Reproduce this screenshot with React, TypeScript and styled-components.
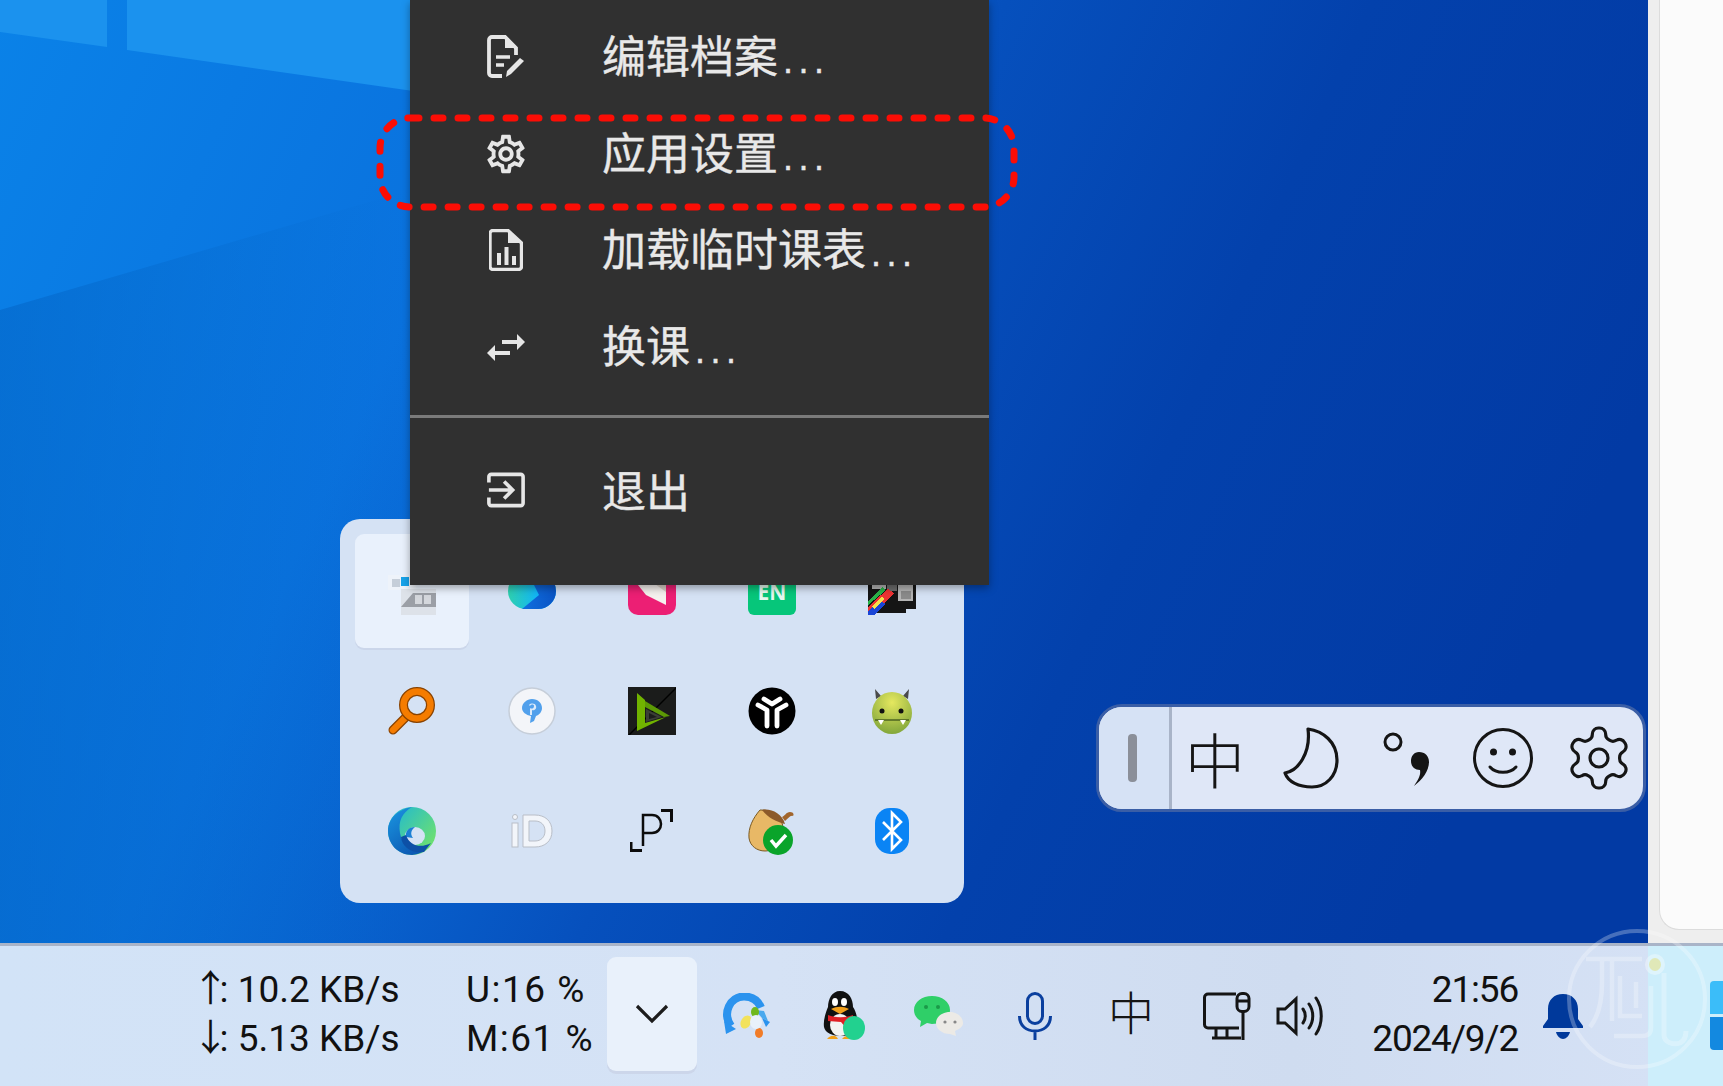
import React from 'react';
import styled, { createGlobalStyle } from 'styled-components';
import { MdOutlineSettings } from 'react-icons/md';

const GlobalStyle = createGlobalStyle`
  html, body { margin: 0; padding: 0; width: 1723px; height: 1086px; overflow: hidden; }
  #root { width: 100%; height: 100%; }
`;

const Screen = styled.div`
  display: flex;
  flex-direction: column;
  width: 1723px;
  height: 1086px;
  overflow: hidden;
  position: relative;
  font-family: Roboto, "Noto Sans CJK SC", sans-serif;
`;

const Desktop = styled.div`
  flex: 1;
  position: relative;
`;

const Wallpaper = styled.svg`
  position: absolute;
  left: 0;
  top: 0;
`;

// ---------- context menu ----------
const Menu = styled.div`
  position: absolute;
  left: 410px;
  top: 0;
  width: 579px;
  height: 585px;
  padding-top: 9px;
  box-sizing: border-box;
  background: #303030;
  box-shadow: 0 3px 8px rgba(0, 0, 0, 0.35);
  z-index: 3;
`;

const MenuRow = styled.div`
  display: flex;
  align-items: center;
  height: 96.5px;
  padding-left: 70px;
  color: #e8e8e8;
  font-family: "Noto Sans CJK SC", sans-serif;
  font-size: 44px;
  line-height: 1;
`;

const MenuIcon = styled.span`
  display: flex;
  align-items: center;
  justify-content: center;
  width: 52px;
  height: 52px;
  margin-right: 70px;
`;

const MenuLabel = styled.span`
  display: flex;
  align-items: baseline;
  margin-top: -3px;
  -webkit-text-stroke: 0.35px #e8e8e8;
`;

const Dots = styled.span`
  font-family: "Liberation Sans", sans-serif;
  letter-spacing: 5.500px;
  font-size: 36px;
  margin-left: 5px;
`;

const MenuDivider = styled.div`
  height: 3px;
  background: #7a7a7a;
  margin: 20px 0 24px;
`;

const Highlight = styled.svg`
  position: absolute;
  left: 370px;
  top: 108px;
  z-index: 4;
`;

// ---------- tray popup ----------
const TrayPopup = styled.div`
  position: absolute;
  left: 340px;
  top: 519px;
  width: 624px;
  height: 384px;
  box-sizing: border-box;
  padding: 15px;
  border-radius: 20px;
  background: #d5e2f4;
  display: grid;
  grid-template-columns: repeat(5, 114px);
  grid-auto-rows: 114px;
  gap: 6px;
  z-index: 2;
`;

const TrayCell = styled.div<{ $active?: boolean }>`
  display: flex;
  align-items: center;
  justify-content: center;
  border-radius: 9px;
  background: ${p => (p.$active ? '#e9f1fc' : 'transparent')};
  box-shadow: ${p => (p.$active ? '0 2px 0 #cbd6ea' : 'none')};
`;

// ---------- input method bar ----------
const ImeBar = styled.div`
  position: absolute;
  left: 1096px;
  top: 704px;
  width: 550px;
  height: 108px;
  box-sizing: border-box;
  display: flex;
  border: 3px solid #3a5ea6;
  border-radius: 26px;
  background: #dfe7f7;
  overflow: hidden;
  z-index: 2;
`;

const ImeHandle = styled.div`
  width: 70px;
  flex: none;
  background: #d6e2f5;
  border-right: 3px solid #a9b4c8;
  display: flex;
  align-items: center;
  justify-content: center;
`;

const ImeGrip = styled.div`
  width: 9px;
  height: 48px;
  border-radius: 4px;
  background: #8b8f99;
  margin-right: 4px;
`;

const ImeButtons = styled.div`
  display: flex;
  margin-left: -5px;
`;

const ImeButton = styled.div`
  width: 96px;
  flex: none;
  display: flex;
  align-items: center;
  justify-content: center;
  color: #151515;
  font-family: "Noto Sans CJK SC", sans-serif;
  font-size: 60px;
  font-weight: 300;
  line-height: 1;
`;

// ---------- side window ----------
const SideWindow = styled.div`
  position: absolute;
  left: 1648px;
  top: 0;
  right: 0;
  bottom: 0;
  background: #eeeeee;
  padding: 0 0 13px 11px;
  box-sizing: border-box;
  display: flex;
`;

const SideCard = styled.div`
  flex: 1;
  background: #fbfbfb;
  border: 1px solid #dcdcdc;
  border-right: 0;
  border-top: 0;
  border-bottom-left-radius: 20px;
`;

// ---------- taskbar ----------
const Taskbar = styled.div`
  height: 143px;
  flex: none;
  box-sizing: border-box;
  border-top: 3px solid #a9b4c8;
  background: linear-gradient(90deg, #d2e3f7 0%, #d5e2f5 45%, #cfdcf0 75%, #d6e2f6 100%);
  display: flex;
  align-items: center;
  padding-left: 192px;
  position: relative;
`;

const TaskbarTint = styled.div`
  position: absolute;
  left: 1648px;
  top: -3px;
  right: 0;
  bottom: 0;
  background: #cdeefb;
  border-top: 3px solid #a9b4c8;
`;

const StatColumn = styled.div<{ $width: number; $spacing?: number }>`
  width: ${p => p.$width}px;
  flex: none;
  display: flex;
  flex-direction: column;
  gap: 9px;
  margin-top: -4px;
  color: #111;
  font-size: 37px;
  line-height: 40px;
  letter-spacing: ${p => p.$spacing ?? 0}px;
  white-space: nowrap;
`;

const Arrow = styled.span`
  letter-spacing: -9.500px;
`;

const ChevronButton = styled.div`
  width: 90px;
  height: 114px;
  flex: none;
  margin: -4px 2px 0 0;
  border-radius: 9px;
  background: #e9f1fb;
  box-shadow: 0 3px 0 #ccd6ea;
  display: flex;
  align-items: center;
  justify-content: center;
`;

const TraySlot = styled.div<{ $width?: number }>`
  width: ${p => p.$width ?? 96}px;
  flex: none;
  display: flex;
  align-items: center;
  justify-content: center;
`;

const TrayGlyph = styled.span`
  color: #151515;
  font-family: "Noto Sans CJK SC", sans-serif;
  font-size: 46px;
  font-weight: 300;
  line-height: 1;
  margin-top: -12px;
`;

const Clock = styled.div`
  width: 191px;
  flex: none;
  text-align: right;
  display: flex;
  flex-direction: column;
  gap: 9px;
  margin-top: -4px;
  color: #111;
  font-size: 37px;
  line-height: 40px;
  letter-spacing: -1.200px;
`;

const BellSlot = styled.div`
  margin-left: 25px;
  display: flex;
  z-index: 1;
`;

const WinLogo = styled.div`
  position: absolute;
  right: 0;
  top: 35px;
  width: 13px;
  height: 69px;
  display: flex;
  flex-direction: column;
  gap: 3px;
  z-index: 1;
`;

const WinPane = styled.div<{ $bottom?: boolean }>`
  flex: 1;
  background: ${p => (p.$bottom ? '#1389e0' : '#3bbdf9')};
  border-radius: ${p => (p.$bottom ? '0 0 0 4px' : '4px 0 0 0')};
`;

const Watermark = styled.svg`
  position: absolute;
  left: 1564px;
  top: 926px;
  z-index: 5;
  pointer-events: none;
`;

const WatermarkDot = styled.div`
  position: absolute;
  left: 1649px;
  top: 958px;
  width: 12px;
  height: 13px;
  border-radius: 50%;
  background: #e0e8b8;
  box-shadow: 0 0 0 4px rgba(255, 255, 255, 0.35);
  z-index: 6;
`;

// ---------- menu icons ----------
const menuStroke = '#e6e6e6';

const EditDocIcon = () => (
  <svg width="40" height="44" viewBox="0 0 40 44" fill="none">
    <path d="M16 41H6a3 3 0 0 1-3-3V5a3 3 0 0 1 3-3h13l11 11v7" stroke={menuStroke} strokeWidth="3.800" />
    <path d="M19 2v11h11z" fill={menuStroke} />
    <path d="M10 22h14M10 30h8" stroke={menuStroke} strokeWidth="3.400" />
    <path d="M20 42l1-6 13-13 4 3-13 13z" fill={menuStroke} />
  </svg>
);

const ChartDocIcon = () => (
  <svg width="34" height="42" viewBox="0 0 34 42" fill="none">
    <path d="M4 1.500h15L32.500 14v23.500a3 3 0 0 1-3 3H4a3 3 0 0 1-3-3v-33a3 3 0 0 1 3-3z" stroke={menuStroke} strokeWidth="3.400" />
    <path d="M19 1.500V14h13.500z" fill={menuStroke} />
    <path d="M8 24h4v12H8zM15.500 18h4v18h-4zM23 27h4v9h-4z" fill={menuStroke} />
  </svg>
);

const SwapIcon = () => (
  <svg width="40" height="30" viewBox="0 0 40 30" fill="none">
    <path d="M16 10h16" stroke={menuStroke} strokeWidth="4" />
    <path d="M31 2l8 8-8 8z" fill={menuStroke} />
    <path d="M8 21h16" stroke={menuStroke} strokeWidth="4" />
    <path d="M9 13l-8 8 8 8z" fill={menuStroke} />
  </svg>
);

const ExitIcon = () => (
  <svg width="38" height="36" viewBox="0 0 40 36" fill="none">
    <path d="M2 10V4a2.500 2.500 0 0 1 2.500-2.500h31A2.500 2.500 0 0 1 38 4v28a2.500 2.500 0 0 1-2.500 2.500h-31A2.500 2.500 0 0 1 2 32v-6" stroke={menuStroke} strokeWidth="3.800" />
    <path d="M2 18h24M18 9l9 9-9 9" stroke={menuStroke} strokeWidth="3.800" />
  </svg>
);

// ---------- tray popup icons ----------
const ClusterIcon = () => (
  <svg width="48" height="48" viewBox="0 0 48 48">
    <rect x="0" y="8" width="28" height="15" fill="#eef3fa" />
    <rect x="4" y="12" width="8" height="8" fill="#c5ced9" />
    <rect x="13" y="10" width="8" height="9" fill="#17a3ea" />
    <rect x="13" y="22" width="35" height="26" fill="#dde2e9" />
    <path d="M13 40l12-14h23v14z" fill="#9b9fa6" />
    <rect x="27" y="28" width="7" height="9" fill="#d4d7dc" />
    <rect x="36" y="28" width="7" height="9" fill="#d4d7dc" />
  </svg>
);

const CapsuleIcon = () => (
  <svg width="48" height="48" viewBox="0 0 48 48">
    <defs>
      <linearGradient id="cap" x1="0" x2="1">
        <stop offset="0" stopColor="#2fd0ae" />
        <stop offset="0.6" stopColor="#12b6f5" />
      </linearGradient>
      <linearGradient id="capDark" x1="0" x2="1">
        <stop offset="0" stopColor="#0f6fe0" />
        <stop offset="1" stopColor="#0a54c4" />
      </linearGradient>
    </defs>
    <rect y="6" width="48" height="36" rx="18" fill="url(#cap)" />
    <path d="M20 6h10a18 18 0 0 1 0 36H14l17-14z" fill="url(#capDark)" />
  </svg>
);

const MailIcon = () => (
  <svg width="48" height="48" viewBox="0 0 48 48">
    <rect width="48" height="48" rx="10" fill="#ec1f74" />
    <path d="M10 8h28v30L18 28l-8-10z" fill="#f5f1ee" />
    <path d="M27 17l11 0v8z" fill="#d9cfc6" />
  </svg>
);

const EnIcon = () => (
  <svg width="48" height="48" viewBox="0 0 48 48">
    <rect width="48" height="48" rx="6" fill="#06c67a" />
    <text x="24" y="33" textAnchor="middle" fontFamily="'Noto Sans'" fontWeight="700" fontSize="21" fill="#e4f8ef">EN</text>
  </svg>
);

const PixelBoxIcon = () => (
  <svg width="48" height="48" viewBox="0 0 48 48" shapeRendering="crispEdges">
    <path d="M0 2h48v40h-10v4H0z" fill="#151515" />
    <path d="M4 6h14v16H4zM30 6h15v28H30z" fill="#b4b4b4" />
    <path d="M19 12h10v12H19z" fill="#6d6d6d" />
    <path d="M33 24h10v8H33z" fill="#8a8a8a" />
    <path d="M0 40l6-6 14-12 6 4-14 14-6 8H0z" fill="#e33" />
    <path d="M0 34l14-14 4 3-18 15z" fill="#2bb34a" />
    <path d="M0 44l12-10 6 3-12 11H0z" fill="#1a45d6" />
    <path d="M4 39l10-9 3 2-11 10z" fill="#f5e14a" />
  </svg>
);

const SearchIcon = () => (
  <svg width="48" height="48" viewBox="0 0 48 48" fill="none">
    <path d="M5 43l13-13" stroke="#8a4300" strokeWidth="9" strokeLinecap="round" />
    <path d="M5 43l13-13" stroke="#f57c00" strokeWidth="6.500" strokeLinecap="round" />
    <circle cx="29" cy="18" r="13.500" stroke="#8a4300" strokeWidth="9" />
    <circle cx="29" cy="18" r="13.500" stroke="#f57c00" strokeWidth="6.500" />
  </svg>
);

const PinIcon = () => (
  <svg width="48" height="48" viewBox="0 0 48 48">
    <circle cx="24" cy="24" r="23" fill="#f3f5f9" stroke="#c6ced9" strokeWidth="1.500" />
    <path d="M24 12c6 0 10 4 10 9 0 4-3 7-6 8l-2 5-4 2 1-7c-5-1-9-4-9-8 0-5 5-9 10-9z" fill="#3f97ea" opacity="0.9" />
    <path d="M21 18c2-2 6-2 7 1 1 3-2 5-4 4v5h-2v-7c1 1 4 1 4-2 0-2-3-2-4 0z" fill="#dbeafa" />
  </svg>
);

const GreenPlayIcon = () => (
  <svg width="48" height="48" viewBox="0 0 48 48">
    <rect width="48" height="48" fill="#1b1c1b" />
    <path d="M48 0L0 48h2L48 2z" fill="#000" />
    <path d="M9 6l8 7v23l21-6L9 44z" fill="#71b300" />
    <path d="M17 14l25 15-6 1-19-10z" fill="#5c9a05" />
    <path d="M18 22l16 8-16 5z" fill="#3b3f36" />
    <path d="M21 26l8 4-8 2z" fill="#1b1c1b" />
  </svg>
);

const BlackCircleIcon = () => (
  <svg width="48" height="48" viewBox="0 0 48 48" fill="none">
    <circle cx="24" cy="24" r="23.500" fill="#000" />
    <path d="M10 18l9 5v16M38 18l-9 5v16M16 12l8 5 8-5" stroke="#fff" strokeWidth="4.800" strokeLinecap="round" strokeLinejoin="round" />
  </svg>
);

const MonsterIcon = () => (
  <svg width="48" height="48" viewBox="0 0 48 48">
    <defs>
      <radialGradient id="mon" cx="0.5" cy="0.25" r="0.75">
        <stop offset="0" stopColor="#e5e85f" />
        <stop offset="1" stopColor="#83a73b" />
      </radialGradient>
    </defs>
    <path d="M8 12l-1-10 6 7zM40 12l1-10-6 7z" fill="#4a4a4a" />
    <ellipse cx="24" cy="26" rx="20" ry="21" fill="url(#mon)" />
    <circle cx="14" cy="24" r="2.500" fill="#111" />
    <circle cx="33" cy="24" r="2.500" fill="#111" />
    <path d="M7 33h34" stroke="#4c6320" strokeWidth="1.500" />
    <path d="M10 33l3 5 3-5zM32 33l3 5 3-5z" fill="#fff" />
  </svg>
);

const EdgeIcon = () => (
  <svg width="48" height="48" viewBox="0 0 48 48">
    <defs>
      <linearGradient id="edgeA" x1="0" y1="0" x2="1" y2="0.8">
        <stop offset="0" stopColor="#18b4dc" />
        <stop offset="1" stopColor="#72e36a" />
      </linearGradient>
      <linearGradient id="edgeB" x1="0" y1="0" x2="0.6" y2="1">
        <stop offset="0" stopColor="#1b98e2" />
        <stop offset="1" stopColor="#0c5ab4" />
      </linearGradient>
    </defs>
    <circle cx="24" cy="24" r="24" fill="url(#edgeA)" />
    <path d="M0 24C0 10 12 2 24 0 14 6 10 14 12 26c2 12 12 20 24 18a24 24 0 0 1-12 4C10 48 0 37 0 24z" fill="url(#edgeB)" />
    <ellipse cx="27" cy="29" rx="10" ry="9" fill="#d5e2f4" />
    <path d="M18 30c-1-6 3-10 9-10-4 3-5 7-2 11z" fill="#1b7fd4" />
    <path d="M13 30c1 10 11 17 23 15l7-9c-9 5-21 4-25-8z" fill="#0d50a6" />
  </svg>
);

const IdIcon = () => (
  <svg width="44" height="36" viewBox="0 0 44 36" fill="#f2f5fa" stroke="#b9bec7" strokeWidth="1">
    <circle cx="5" cy="4" r="2.500" />
    <rect x="2" y="10" width="6" height="24" />
    <path fillRule="evenodd" d="M13 2h12c10 0 17 6 17 16s-7 16-17 16H13zM19 8v20h6c6 0 10-4 10-10S31 8 25 8z" />
  </svg>
);

const BracketPIcon = () => (
  <svg width="44" height="44" viewBox="0 0 44 44" fill="none" stroke="#0c0c0c">
    <path d="M1 43V33M1 41.500h11M31 1.500h12M41.500 1v12" strokeWidth="3" />
    <path d="M13 37V6h9c12 0 12 18 0 18h-9" strokeWidth="2.500" />
  </svg>
);

const AcornIcon = () => (
  <svg width="48" height="48" viewBox="0 0 48 48">
    <path d="M12 3c-7 8-12 18-11 28 1 8 8 13 16 13 12 0 20-12 18-24C34 12 26 2 12 3z" fill="#e8b866" stroke="#7a5a24" strokeWidth="1" />
    <path d="M14 3c8-2 20 3 23 14-8-2-17-6-23-14z" fill="#8c5a2a" />
    <path d="M34 10c3-1 4-5 8-5 4 0 4 3 3 4-3-1-5 3-8 5z" fill="#a1652c" />
    <ellipse cx="30" cy="33" rx="15" ry="15" fill="#0aa42a" />
    <path d="M23 33l5 6 10-11" fill="none" stroke="#fff" strokeWidth="3.500" />
  </svg>
);

const BluetoothIcon = () => (
  <svg width="34" height="46" viewBox="0 0 34 46" fill="none">
    <rect width="34" height="46" rx="15" fill="#0a84f5" />
    <path d="M8 14l18 18-9 9V5l9 9-18 18" stroke="#fff" strokeWidth="2.600" />
  </svg>
);

// ---------- taskbar icons ----------
const ChevronIcon = () => (
  <svg width="34" height="20" viewBox="0 0 34 20" fill="none">
    <path d="M2 2l15 15L32 2" stroke="#1c1c1c" strokeWidth="3.200" />
  </svg>
);

const MeetingIcon = () => (
  <svg width="50" height="46" viewBox="0 0 50 46" fill="none">
    <path d="M9 33C0 20 8 3.500 22 3.500c8 0 14 4 17 11" stroke="#2b93ee" strokeWidth="8" />
    <path d="M2 28l12 8-10 5z" fill="#2b93ee" />
    <path d="M33 17l9 1 4 10-6-3z" fill="#4aa9ee" />
    <ellipse cx="33" cy="19" rx="4" ry="5" fill="#6fb81c" />
    <ellipse cx="24" cy="29" rx="5" ry="7" transform="rotate(30 24 29)" fill="#f2e25c" />
    <ellipse cx="37" cy="40" rx="4" ry="5" fill="#f17c28" />
    <ellipse cx="34" cy="29" rx="6" ry="7" fill="#e8f1fb" />
    <path d="M40 25l8 4-4 5z" fill="#2b93ee" />
  </svg>
);

const QqIcon = () => (
  <svg width="46" height="50" viewBox="0 0 46 50">
    <path d="M20 0c9 0 13 8 13 16 3 4 6 14 3 20-2 6-7 9-15 9S5 42 4 36c-1-7 2-15 4-20C8 8 12 0 20 0z" fill="#111" />
    <ellipse cx="20" cy="34" rx="10" ry="11" fill="#f3f3f3" />
    <ellipse cx="15" cy="11" rx="3" ry="4" fill="#fff" />
    <ellipse cx="24" cy="11" rx="3" ry="4" fill="#fff" />
    <path d="M11 18c6-3 12-3 18 0l-9 5z" fill="#f2a01b" />
    <path d="M8 24c8 3 17 3 25 0v8l-6-1v7l-6-7-13-1z" fill="#e01f25" />
    <path d="M9 46c4-2 7-2 9 2H7zM24 46c4-2 6-2 9 2H22z" fill="#f2a01b" />
    <ellipse cx="34" cy="37" rx="11" ry="12" fill="#22d18f" />
  </svg>
);

const WechatIcon = () => (
  <svg width="50" height="40" viewBox="0 0 50 40">
    <path d="M18 0C8 0 0 6 0 14c0 5 3 9 7 11l-1 6 7-4c2 0 3 1 5 1 10 0 18-6 18-14S28 0 18 0z" fill="#2fcf68" />
    <circle cx="12" cy="11" r="2" fill="#1a9a48" />
    <circle cx="24" cy="11" r="2" fill="#1a9a48" />
    <path d="M36 16c-8 0-14 5-14 11s6 11 14 11l6 2-1-5c4-2 8-4 8-8 0-6-6-11-13-11z" fill="#eceae6" />
    <circle cx="31" cy="26" r="1.600" fill="#888" />
    <circle cx="41" cy="26" r="1.600" fill="#888" />
  </svg>
);

const MicIcon = () => (
  <svg width="34" height="48" viewBox="0 0 34 48" fill="none" stroke="#0a3f9e" strokeWidth="3">
    <rect x="9.500" y="1.500" width="15" height="30" rx="7.500" />
    <path d="M1.500 24c0 10 7 15 15.500 15s15.500-5 15.500-15M17 39v9" />
  </svg>
);

const NetworkIcon = () => (
  <svg width="48" height="48" viewBox="0 0 48 48" fill="none" stroke="#151515" strokeWidth="3">
    <path d="M33 2H5a3.500 3.500 0 0 0-3.500 3.500v27A3.500 3.500 0 0 0 5 36h31" />
    <path d="M13 36v10M24 36v10M9 46h29" />
    <rect x="34" y="1.500" width="12" height="18" rx="5" />
    <path d="M34 9h12M40 19.500V48" />
  </svg>
);

const VolumeIcon = () => (
  <svg width="50" height="42" viewBox="0 0 50 42" fill="none" stroke="#151515" strokeWidth="3">
    <path d="M2 14v14h7l11 10V4L9 14z" />
    <path d="M27 14c3 4 3 10 0 14M33 9c5 7 5 17 0 24M40 3c7 10 7 26 0 36" strokeLinecap="round" />
  </svg>
);

const BellIcon = () => (
  <svg width="40" height="45" viewBox="0 0 40 45" fill="#00399b">
    <path d="M20 0C11 0 5 6 5 15v10L0 32v2h40v-2l-5-7V15C35 6 29 0 20 0z" />
    <path d="M13 38h14c-1 4-4 7-7 7s-6-3-7-7z" />
  </svg>
);

// ---------- input method icons ----------
const MoonIcon = () => (
  <svg width="62" height="62" viewBox="-3 0 62 62" fill="none" stroke="#151515" strokeWidth="3.200">
    <path d="M25 2c15 2 29 13 29 31 0 16-11 27-25 27C16 60 5 55 2 46c13-2 26-20 23-44z" strokeLinejoin="round" />
  </svg>
);

const PunctIcon = () => (
  <svg width="50" height="60" viewBox="0 0 50 60" fill="none">
    <circle cx="11" cy="14" r="8" stroke="#151515" strokeWidth="3" />
    <path d="M37 24c6 0 10 4 10 10 0 9-7 18-15 24 4-6 7-11 6-16-5 0-9-3-9-9 0-5 3-9 8-9z" fill="#151515" />
  </svg>
);

const SmileIcon = () => (
  <svg width="60" height="60" viewBox="0 0 60 60" fill="none" stroke="#151515" strokeWidth="3">
    <circle cx="30" cy="30" r="28.500" />
    <circle cx="20.500" cy="24" r="3.500" fill="#151515" stroke="none" />
    <circle cx="39.500" cy="24" r="3.500" fill="#151515" stroke="none" />
    <path d="M17 39c6 7 20 7 26 0" strokeLinecap="round" />
  </svg>
);

const GearIcon = () => (
  <svg width="72" height="72" viewBox="0 0 24 24" fill="none" stroke="#151515" strokeWidth="1.050">
    <path d="M12.220 2h-.44a2 2 0 0 0-2 2v.18a2 2 0 0 1-1 1.730l-.43.250a2 2 0 0 1-2 0l-.150-.080a2 2 0 0 0-2.730.730l-.220.380a2 2 0 0 0 .730 2.730l.150.100a2 2 0 0 1 1 1.720v.510a2 2 0 0 1-1 1.740l-.150.090a2 2 0 0 0-.730 2.730l.220.380a2 2 0 0 0 2.730.730l.150-.080a2 2 0 0 1 2 0l.430.250a2 2 0 0 1 1 1.730V20a2 2 0 0 0 2 2h.44a2 2 0 0 0 2-2v-.18a2 2 0 0 1 1-1.730l.43-.250a2 2 0 0 1 2 0l.150.080a2 2 0 0 0 2.730-.730l.220-.390a2 2 0 0 0-.730-2.730l-.150-.080a2 2 0 0 1-1-1.740v-.500a2 2 0 0 1 1-1.740l.150-.090a2 2 0 0 0 .730-2.730l-.220-.380a2 2 0 0 0-2.730-.730l-.150.080a2 2 0 0 1-2 0l-.430-.250a2 2 0 0 1-1-1.730V4a2 2 0 0 0-2-2z" />
    <circle cx="12" cy="12" r="3" />
  </svg>
);

const menuItems = [
  { icon: <EditDocIcon />, label: '编辑档案' },
  { icon: <MdOutlineSettings size={46} color={menuStroke} />, label: '应用设置' },
  { icon: <ChartDocIcon />, label: '加载临时课表' },
  { icon: <SwapIcon />, label: '换课' },
];

const trayIcons = [
  <ClusterIcon />, <CapsuleIcon />, <MailIcon />, <EnIcon />, <PixelBoxIcon />,
  <SearchIcon />, <PinIcon />, <GreenPlayIcon />, <BlackCircleIcon />, <MonsterIcon />,
  <EdgeIcon />, <IdIcon />, <BracketPIcon />, <AcornIcon />, <BluetoothIcon />,
];

export default function App() {
  return (
    <Screen>
      <GlobalStyle />
      <Desktop>
        <Wallpaper width="1723" height="943" viewBox="0 0 1723 943">
          <defs>
            <linearGradient id="wall" x1="0" y1="0" x2="1" y2="0.25">
              <stop offset="0" stopColor="#0a82e8" />
              <stop offset="0.3" stopColor="#0a72de" />
              <stop offset="0.55" stopColor="#0650bd" />
              <stop offset="0.75" stopColor="#0341ac" />
              <stop offset="1" stopColor="#023aa4" />
            </linearGradient>
            <linearGradient id="wallLow" x1="0" y1="0" x2="1" y2="0">
              <stop offset="0" stopColor="#0466c8" stopOpacity="0.6" />
              <stop offset="1" stopColor="#0466c8" stopOpacity="0" />
            </linearGradient>
          </defs>
          <rect width="1723" height="943" fill="url(#wall)" />
          <path d="M0 310L410 190V943H0z" fill="url(#wallLow)" />
          <path d="M0 0H107V47L0 32z" fill="#1b92ee" />
          <path d="M127 0H420V92L127 50z" fill="#1b92ee" />
        </Wallpaper>

        <SideWindow>
          <SideCard />
        </SideWindow>

        <TrayPopup>
          {trayIcons.map((icon, i) => (
            <TrayCell key={i} $active={i === 0}>{icon}</TrayCell>
          ))}
        </TrayPopup>

        <Menu>
          {menuItems.map(item => (
            <MenuRow key={item.label}>
              <MenuIcon>{item.icon}</MenuIcon>
              <MenuLabel>{item.label}<Dots>...</Dots></MenuLabel>
            </MenuRow>
          ))}
          <MenuDivider />
          <MenuRow>
            <MenuIcon><ExitIcon /></MenuIcon>
            <MenuLabel>退出</MenuLabel>
          </MenuRow>
        </Menu>

        <Highlight width="650" height="110" viewBox="0 0 650 110" fill="none">
          <rect x="10" y="10" width="634" height="89" rx="30" stroke="#fb0d05" strokeWidth="7" strokeLinecap="round" strokeDasharray="9 15" />
        </Highlight>

        <ImeBar>
          <ImeHandle><ImeGrip /></ImeHandle>
          <ImeButtons>
            <ImeButton>中</ImeButton>
            <ImeButton><MoonIcon /></ImeButton>
            <ImeButton><PunctIcon /></ImeButton>
            <ImeButton><SmileIcon /></ImeButton>
            <ImeButton><GearIcon /></ImeButton>
          </ImeButtons>
        </ImeBar>
      </Desktop>

      <Taskbar>
        <TaskbarTint />
        <StatColumn $width={274}>
          <span><Arrow>↑</Arrow>: 10.2 KB/s</span>
          <span><Arrow>↓</Arrow>: 5.13 KB/s</span>
        </StatColumn>
        <StatColumn $width={141} $spacing={1.500}>
          <span>U:16 %</span>
          <span>M:61 %</span>
        </StatColumn>
        <ChevronButton><ChevronIcon /></ChevronButton>
        <TraySlot><MeetingIcon /></TraySlot>
        <TraySlot><QqIcon /></TraySlot>
        <TraySlot><WechatIcon /></TraySlot>
        <TraySlot><MicIcon /></TraySlot>
        <TraySlot><TrayGlyph>中</TrayGlyph></TraySlot>
        <TraySlot><NetworkIcon /></TraySlot>
        <TraySlot $width={52}><VolumeIcon /></TraySlot>
        <Clock>
          <span>21:56</span>
          <span>2024/9/2</span>
        </Clock>
        <BellSlot><BellIcon /></BellSlot>
        <WinLogo>
          <WinPane />
          <WinPane $bottom />
        </WinLogo>
      </Taskbar>

      <Watermark width="150" height="150" viewBox="0 0 150 150" fill="none" stroke="#ffffff" strokeOpacity="0.27" strokeWidth="4">
        <circle cx="73" cy="73" r="68" />
        <path d="M22 33h56M38 35v22c0 20-4 34-12 44M48 35v60" strokeWidth="4.500" />
        <path d="M56 50v40h22M72 56v26M87 60v42c0 6-4 8-9 8H50" strokeWidth="4.500" />
        <path d="M100 47v62c0 8 10 10 16 8 4-2 6-6 6-12" strokeWidth="5" />
      </Watermark>
      <WatermarkDot />
    </Screen>
  );
}
